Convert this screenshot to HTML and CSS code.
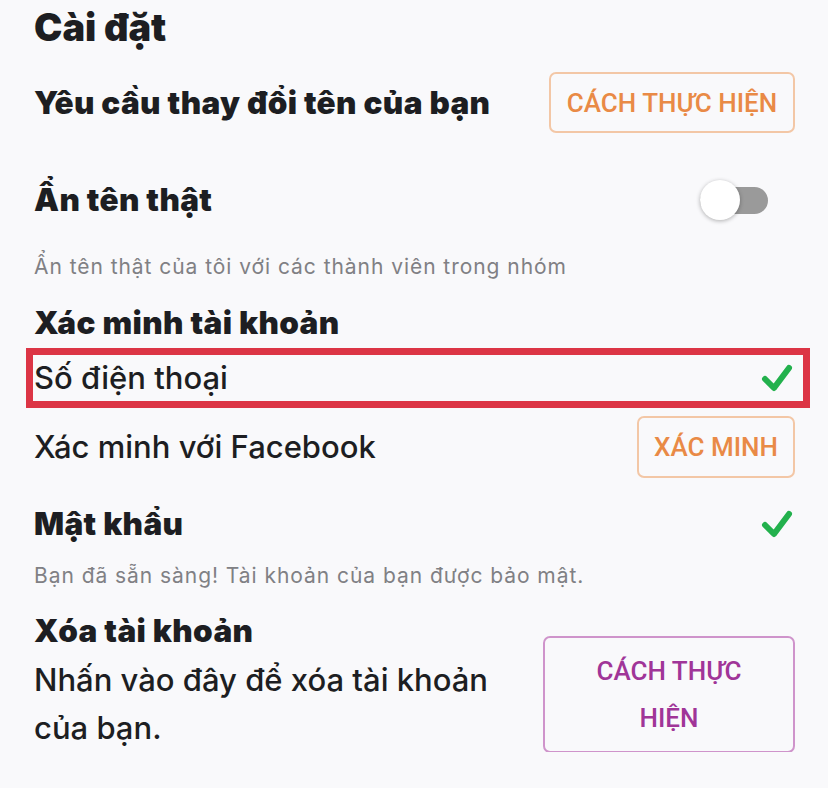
FILE: index.html
```html
<!DOCTYPE html>
<html lang="vi">
<head>
<meta charset="utf-8">
<link rel="stylesheet" href="styles.css">
</head>
<body>
<main class="page">
  <h1 class="title">Cài đặt</h1>

  <div class="row row-name">
    <h2 class="heading">Yêu cầu thay đổi tên của bạn</h2>
    <button class="btn btn-orange btn-how">CÁCH THỰC HIỆN</button>
  </div>

  <div class="row row-hide">
    <h2 class="heading">Ẩn tên thật</h2>
    <span class="toggle"><span class="knob"></span></span>
  </div>
  <p class="desc desc-hide">Ẩn tên thật của tôi với các thành viên trong nhóm</p>

  <h2 class="heading heading-verify">Xác minh tài khoản</h2>
  <div class="row row-phone">
    <span class="label">Số điện thoại</span>
    <svg class="check" viewBox="0 0 32 30" width="32" height="30"><path d="M4 16 L13 25 L28 5" fill="none" stroke="#23b14d" stroke-width="6" stroke-linecap="round" stroke-linejoin="round"/></svg>
  </div>
  <div class="row row-fb">
    <span class="label">Xác minh với Facebook</span>
    <button class="btn btn-orange btn-verify">XÁC MINH</button>
  </div>

  <div class="row row-pass">
    <h2 class="heading">Mật khẩu</h2>
    <svg class="check" viewBox="0 0 32 30" width="32" height="30"><path d="M4 16 L13 25 L28 5" fill="none" stroke="#23b14d" stroke-width="6" stroke-linecap="round" stroke-linejoin="round"/></svg>
  </div>
  <p class="desc desc-pass">Bạn đã sẵn sàng! Tài khoản của bạn được bảo mật.</p>

  <div class="row row-delete">
    <div class="delete-text">
      <h2 class="heading">Xóa tài khoản</h2>
      <p class="label delete-desc">Nhấn vào đây để xóa tài khoản của bạn.</p>
    </div>
    <button class="btn btn-purple btn-delete">CÁCH THỰC HIỆN</button>
  </div>
</main>
</body>
</html>
```

FILE: styles.css
```css
html, body {
  margin: 0;
  padding: 0;
  background: #f9f9fb;
}
body {
  font-family: Inter, "Noto Sans", sans-serif;
  color: #1d1e22;
}
.page {
  padding: 5px 33px 0 34px;
}
.title {
  margin: 0;
  font-size: 38px;
  line-height: 44px;
  font-weight: 900;
  letter-spacing: 0;
}
.heading {
  margin: 0;
  font-size: 31.5px;
  line-height: 40px;
  font-weight: 900;
  letter-spacing: 0.35px;
}
.row {
  display: flex;
  justify-content: space-between;
  align-items: center;
}
.row-name {
  margin-top: 23px;
}
.row-hide {
  margin-top: 47px;
  height: 40px;
}
.desc {
  margin: 0;
  font-size: 21px;
  line-height: 28px;
  color: #808084;
  letter-spacing: 0.95px;
}
.desc-hide {
  margin-top: 33px;
}
.heading-verify {
  margin-top: 22px;
}
.label {
  font-size: 31px;
  line-height: 40px;
  font-weight: 450;
}
.row-phone {
  position: relative;
  margin-top: 12px;
  height: 46px;
}
.row-phone::after {
  content: "";
  position: absolute;
  left: -8px;
  right: -15px;
  top: -7px;
  bottom: -7px;
  border: 7px solid #dc3545;
}
.row-phone .check {
  margin-right: 2px;
}
.row-fb {
  margin-top: 15px;
}
.row-pass {
  margin-top: 26px;
}
.row-pass .check {
  margin-right: 2px;
}
.desc-pass {
  margin-top: 18px;
}
.row-delete {
  margin-top: 21px;
  align-items: flex-end;
}
.delete-desc {
  margin: 5px 0 0;
  max-width: 470px;
  line-height: 48px;
}
.btn {
  font-family: Roboto, "Liberation Sans", sans-serif;
  font-weight: 500;
  background: transparent;
  border-radius: 7px;
  font-size: 26px;
  cursor: pointer;
}
.btn-orange {
  color: #e98a46;
  border: 2px solid #f3c7a6;
}
.btn-how {
  width: 246px;
  height: 61px;
  padding: 0;
}
.btn-verify {
  width: 158px;
  height: 62px;
  padding: 0;
}
.btn-purple {
  color: #a03598;
  border: 2px solid #cf94cb;
  width: 252px;
  height: 117px;
  padding: 0 40px;
  line-height: 47px;
  margin-bottom: -1px;
}
.toggle {
  position: relative;
  width: 68px;
  height: 27px;
  border-radius: 14px;
  background: #9a9a9a;
  margin-right: 27px;
}
.knob {
  position: absolute;
  left: 0;
  top: -7px;
  width: 40px;
  height: 40px;
  border-radius: 50%;
  background: #fff;
  box-shadow: 0 1px 4px rgba(0,0,0,0.3);
}
```
